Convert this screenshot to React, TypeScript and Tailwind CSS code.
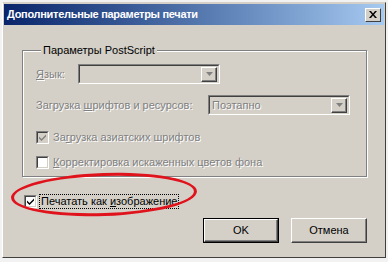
import React from 'react';

const font = { fontFamily: '"Liberation Sans", Arial, sans-serif' };

function Arrow({ disabled }: { disabled?: boolean }) {
  return (
    <div className="flex h-[15px] w-[16px] items-center justify-center border border-t-white border-l-white border-b-[#404040] border-r-[#404040] bg-[#d4d0c8] [box-shadow:inset_-1px_-1px_0_#808080]">
      <svg width="7" height="4" viewBox="0 0 7 4">
        <path d="M0 0h7L3.5 4z" fill={disabled ? '#808080' : '#000'} />
      </svg>
    </div>
  );
}

function Combo({ text, className }: { text?: string; className: string }) {
  return (
    <div className={`flex h-[20px] items-center border border-t-[#808080] border-l-[#808080] border-b-white border-r-white ${className}`}>
      <div className="flex h-full w-full items-center justify-between border border-t-[#404040] border-l-[#404040] border-b-[#d4d0c8] border-r-[#d4d0c8] pl-[2px] pr-[1px]">
        <span className="text-[#808080] [text-shadow:1px_1px_0_#fff]">{text}</span>
        <Arrow disabled />
      </div>
    </div>
  );
}

function Check({ checked, disabled }: { checked?: boolean; disabled?: boolean }) {
  return (
    <div className="h-[13px] w-[13px] shrink-0 border border-t-[#808080] border-l-[#808080] border-b-white border-r-white">
      <div className={`flex h-full w-full items-center justify-center border border-t-[#404040] border-l-[#404040] border-b-[#d4d0c8] border-r-[#d4d0c8] ${disabled ? 'bg-[#d4d0c8]' : 'bg-white'}`}>
        {checked && (
          <svg width="7" height="7" viewBox="0 0 7 7">
            <path d="M0 2.5l2.5 2.5L7 0.5v2L2.5 7 0 4.5z" fill={disabled ? '#808080' : '#000'} />
          </svg>
        )}
      </div>
    </div>
  );
}

function Btn({ label, isDefault }: { label: string; isDefault?: boolean }) {
  return (
    <div className={`h-[25px] w-[76px] ${isDefault ? 'border border-black' : ''}`}>
      <div className="flex h-full w-full items-center justify-center border border-t-white border-l-white border-b-[#404040] border-r-[#404040] bg-[#d4d0c8] [box-shadow:inset_-1px_-1px_0_#808080]">
        {label}
      </div>
    </div>
  );
}

export default function App() {
  return (
    <div className="h-[262px] w-[388px] bg-[#f2f2f2] pl-[2px] pr-[2px] pt-[2px] text-[11px] leading-[13px] text-black" style={font}>
      <div className="flex h-[256px] flex-col border border-t-[#d4d0c8] border-l-white border-b-[#404040] border-r-[#404040] bg-[#d4d0c8]">
        <div className="mx-[1px] mt-[1px] flex h-[21px] items-center justify-between bg-gradient-to-r from-[#0a246a] to-[#a6caf0] pl-[3px] pr-[3px]">
          <span className="text-[11px] font-bold tracking-[-0.3px] text-white">Дополнительные параметры печати</span>
          <div className="flex h-[14px] w-[16px] items-center justify-center border border-t-white border-l-white border-b-[#404040] border-r-[#404040] bg-[#d4d0c8]">
            <svg width="8" height="7" viewBox="0 0 8 7">
              <path d="M0 0h2l2 2.5L6 0h2L5 3.5 8 7H6L4 4.5 2 7H0l3-3.5z" fill="#000" />
            </svg>
          </div>
        </div>

        <div className="relative ml-[19px] mr-[18px] mt-[25px] h-[127px] border border-[#808080] [box-shadow:1px_1px_0_#fff,inset_1px_1px_0_#fff]">
          <span className="absolute left-[18px] top-[-7px] bg-[#d4d0c8] px-[2px]">Параметры PostScript</span>
          <div className="ml-[13px] mt-[13px] flex items-center">
            <span className="w-[42px] text-[#808080] [text-shadow:1px_1px_0_#fff]"><u>Я</u>зык:</span>
            <Combo className="w-[142px]" />
          </div>
          <div className="ml-[13px] mt-[11px] flex items-center">
            <span className="w-[172px] whitespace-nowrap text-[#808080] [text-shadow:1px_1px_0_#fff]">Загрузка <u>ш</u>рифтов и ресурсов:</span>
            <Combo text="Поэтапно" className="w-[142px]" />
          </div>
          <div className="ml-[13px] mt-[16px] flex items-center gap-[4px]">
            <Check checked disabled />
            <span className="text-[#808080] [text-shadow:1px_1px_0_#fff]">За<u>г</u>рузка азиатских шрифтов</span>
          </div>
          <div className="ml-[13px] mt-[12px] flex items-center gap-[4px]">
            <Check />
            <span className="text-[#808080] [text-shadow:1px_1px_0_#fff]"><u>К</u>орректировка искаженных цветов фона</span>
          </div>
        </div>

        <div className="relative ml-[21px] mt-[17px] flex items-center gap-[2px]">
          <Check checked />
          <span className="border border-dotted border-black px-[1px]">Печатать как <u>и</u>зображение</span>
          <div className="pointer-events-none absolute left-[-13px] top-[-21px] h-[43px] w-[186px] rounded-[50%] border-[3px] border-[#e0121b] -rotate-[2deg]" />
        </div>

        <div className="mr-[18px] mt-[9px] flex justify-end gap-[12px]">
          <Btn label="OK" isDefault />
          <Btn label="Отмена" />
        </div>
      </div>
    </div>
  );
}
